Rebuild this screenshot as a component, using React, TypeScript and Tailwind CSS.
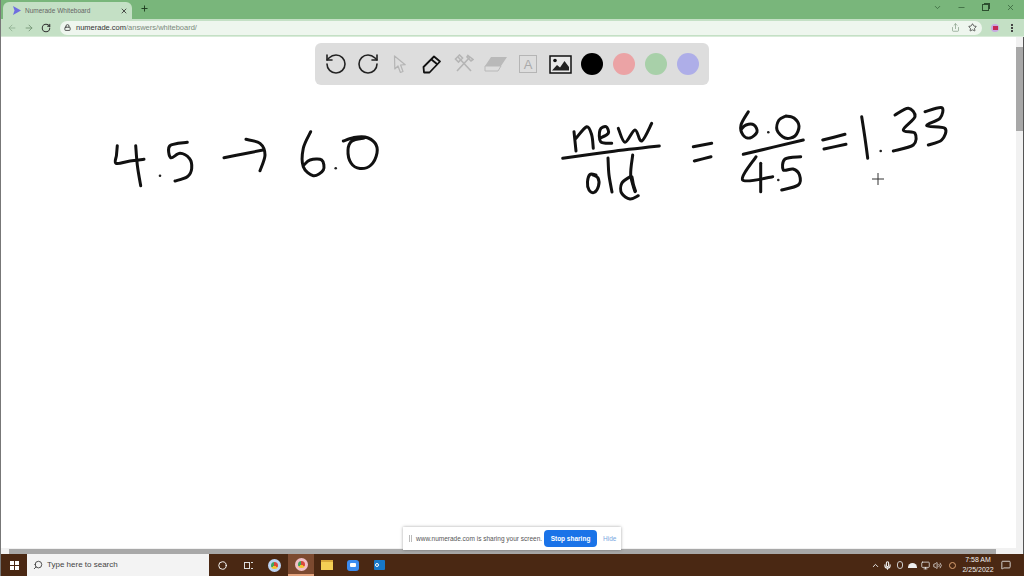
import React from 'react';
import { ArrowLeft, ArrowRight, RotateCw, RotateCcw, Lock, Star, Share, X, Plus, ChevronDown, Minus, ChevronUp, Mic, Search, Volume2, Monitor, MessageSquare, Circle } from 'lucide-react';

type Pt = [number, number];

// smooth a hand drawn stroke through its points
const smooth = (pts: Pt[]) => {
  let d = `M${pts[0][0]} ${pts[0][1]}`;
  for (let i = 0; i < pts.length - 1; i++) {
    const p0 = pts[Math.max(i - 1, 0)];
    const p1 = pts[i];
    const p2 = pts[i + 1];
    const p3 = pts[Math.min(i + 2, pts.length - 1)];
    const c1x = p1[0] + (p2[0] - p0[0]) / 6;
    const c1y = p1[1] + (p2[1] - p0[1]) / 6;
    const c2x = p2[0] - (p3[0] - p1[0]) / 6;
    const c2y = p2[1] - (p3[1] - p1[1]) / 6;
    d += ` C${c1x.toFixed(1)} ${c1y.toFixed(1)} ${c2x.toFixed(1)} ${c2y.toFixed(1)} ${p2[0]} ${p2[1]}`;
  }
  return d;
};

const strokes: Pt[][] = [
  // 4.5
  [[117.3, 145.7], [116.5, 155], [116, 163.3], [130, 161], [144, 159.3]],
  [[135.7, 145.7], [137.3, 165], [140.7, 185.7]],
  [[187.3, 142.3], [170, 145.7], [170.7, 157.7], [180, 153.3], [189.3, 158.3], [191.7, 168.3], [187.3, 176.7], [175, 181]],
  // arrow
  [[224, 157.7], [243, 154], [263, 150]],
  [[246, 139.3], [260, 143.3], [265, 155], [260, 170.7]],
  // 6.0
  [[310.7, 131.7], [303.3, 148.3], [303.3, 166.7], [313.3, 175.7], [323.3, 170], [321.7, 160], [310, 160], [304, 165]],
  [[343.3, 141], [354, 137.5], [365, 137], [375, 143], [377, 153], [371, 165], [360, 168.5], [351, 163], [348, 150], [352, 141], [364, 138]],
  // new
  [[574, 131.7], [576, 151]],
  [[576, 138.3], [586.7, 126.7], [591.7, 135], [593.3, 148.3]],
  [[600, 138.3], [608.3, 133.3], [606, 126.7], [600, 130], [600.7, 141.7], [611.7, 143.3]],
  [[618.3, 128.3], [625, 142.3], [635, 130], [641.7, 141], [651.7, 123.3]],
  [[562.7, 158.3], [610, 151.7], [659.3, 146]],
  // old
  [[596, 175], [590, 174.5], [587.5, 182], [589, 190], [594, 192.5], [598.5, 186], [598, 178], [593, 175]],
  [[608, 158], [609, 175], [612, 192]],
  [[632.7, 155], [630.7, 175], [635, 191.7]],
  [[632, 177], [633.5, 185], [635.5, 191]],
  [[630, 176.7], [621.7, 183.3], [621.7, 193.3], [630, 199], [638.3, 195.7]],
  // = 6.0 / 4.5
  [[693.3, 146.7], [711.7, 143.3]],
  [[694.3, 161], [711, 156.7]],
  [[748.3, 111.7], [741, 125], [743, 135], [750, 138], [757, 132], [754, 125], [746, 125], [741.5, 129]],
  [[786, 116], [779, 120], [777, 130], [785, 138], [795, 136], [799, 126], [794, 118], [786, 116]],
  [[743.3, 154.3], [803.3, 140]],
  [[756, 156.7], [742.7, 180], [772.7, 176.7]],
  [[760.7, 163.3], [760.7, 191.7]],
  [[800.7, 156.7], [785, 159], [783.3, 170], [793, 169], [799.5, 175], [798.3, 185], [781.7, 190]],
  // = 1.33
  [[822.7, 140], [845, 134.3]],
  [[824, 149], [846, 144.3]],
  [[861.7, 116.7], [865, 138.3], [867.7, 158.3]],
  [[895, 115], [908.3, 108.3], [915, 116.7], [903.3, 130], [915, 133.3], [913.3, 145], [893.3, 151]],
  [[925, 111.7], [941.7, 107.7], [940, 118.3], [926.7, 125.7], [945, 128.3], [941.7, 140], [928.3, 145]],
];

const dots: Pt[] = [[160, 175.7], [335.7, 168.3], [768.3, 132.3], [778.3, 180], [880.7, 151]];

const Ink = () => (
  <svg className="absolute -left-px top-0" width="1015" height="511" viewBox="0 37 1015 511" fill="none">
    {strokes.map((s, i) => (
      <path key={i} d={smooth(s)} stroke="#111" strokeWidth="3" strokeLinecap="round" strokeLinejoin="round" />
    ))}
    {dots.map(([x, y], i) => (
      <circle key={i} cx={x} cy={y} r="1.3" fill="#222" />
    ))}
    {/* crosshair pointer */}
    <path d="M878 173v12M872 179h12" stroke="#333" strokeWidth="1" />
  </svg>
);

const ToolSlot = ({ children }: { children: React.ReactNode }) => (
  <div className="w-8 h-8 flex items-center justify-center">{children}</div>
);

const Swatch = ({ className }: { className: string }) => (
  <ToolSlot>
    <div className={`w-[22px] h-[22px] rounded-full ${className}`} />
  </ToolSlot>
);

const Toolbar = () => (
  <div className="absolute left-[314px] top-[6px] w-[394px] h-[42px] bg-[#dddddd] rounded-md flex items-center pl-[5px]">
    <ToolSlot><RotateCcw size={24} strokeWidth={1.6} className="text-[#222]" /></ToolSlot>
    <ToolSlot><RotateCw size={24} strokeWidth={1.6} className="text-[#222]" /></ToolSlot>
    <ToolSlot>
      <svg width="14" height="19" viewBox="0 0 14 19" fill="none" stroke="#b5b5b5" strokeWidth="1.2" strokeLinejoin="round">
        <path d="M1.5 1 1.800 14l3.200-3 2.400 6.500 2.600-1-2.400-6.500 4.600-.3z" />
      </svg>
    </ToolSlot>
    <ToolSlot>
      <svg width="20" height="20" viewBox="0 0 20 20" fill="none" stroke="#111" strokeWidth="1.8" strokeLinejoin="round">
        <path d="M1.5 13 12 2.500 18 7.500 7.500 18.500H2z" />
        <path d="m9.500 5.500 6 5" />
      </svg>
    </ToolSlot>
    <ToolSlot>
      <svg width="20" height="20" viewBox="0 0 20 20" fill="none" stroke="#b5b5b5" strokeWidth="1.6">
        <path d="M4 3 17 17M16 3 3 17" />
        <path d="m1.5 5 4-4 3 3-4 4zM14 1.500l5 4-2 1.500-4-4z" />
      </svg>
    </ToolSlot>
    <ToolSlot>
      <svg width="24" height="18" viewBox="0 0 24 18" fill="none">
        <path d="M7 2h16l-6 9H1z" fill="#b9b9b9" />
        <path d="M1 11h16l-3 5H1z" stroke="#b9b9b9" strokeWidth="1" />
      </svg>
    </ToolSlot>
    <ToolSlot>
      <div className="w-[18px] h-[18px] border border-[#b5b5b5] flex items-center justify-center text-[13px] leading-none text-[#aaaaaa] font-['Liberation_Sans',sans-serif]">A</div>
    </ToolSlot>
    <ToolSlot>
      <svg width="23" height="19" viewBox="0 0 23 19">
        <rect x="1" y="1" width="21" height="17" fill="#e8e8e8" stroke="#111" strokeWidth="1.5" />
        <circle cx="6" cy="5.500" r="1.800" fill="#111" />
        <path d="M3 15.500 8 10l3 2.500L15.500 6 20 12v3.500z" fill="#222" />
      </svg>
    </ToolSlot>
    <Swatch className="bg-black" />
    <Swatch className="bg-[#eba3a5]" />
    <Swatch className="bg-[#a8d0a9]" />
    <Swatch className="bg-[#aeaee8]" />
  </div>
);

const ShareBar = () => (
  <div className="absolute left-[402px] top-[490px] w-[218px] h-[23px] bg-white shadow-[0_0_3px_rgba(0,0,0,0.35)] flex items-center text-[6.5px] text-[#555] font-['Liberation_Sans',sans-serif]">
    <div className="ml-[6px] w-[3px] h-[7px] border-x border-[#bbb]" />
    <span className="ml-[4px] whitespace-nowrap">www.numerade.com is sharing your screen.</span>
    <div className="absolute left-[141px] top-[3px] w-[53px] h-[17px] rounded-sm bg-[#1a73e8] text-white font-bold flex items-center justify-center">Stop sharing</div>
    <span className="absolute left-[200px] text-[#7aa7e0]">Hide</span>
  </div>
);

const ChromeBar = () => (
  <div className="bg-[#79b67b] font-['Liberation_Sans',sans-serif]">
    <div className="h-[19px] flex items-end pl-[2px]">
      <div className="w-[129px] h-[17px] bg-[#c4e0c5] rounded-t-md flex items-center pl-[8px] pr-[4px]">
        <svg width="11" height="11" viewBox="0 0 11 11"><path d="M2 1l8 4.500L2 10l1.500-4.500z" fill="#6e6ee0" /></svg>
        <span className="ml-[3px] text-[6.5px] text-[#666] whitespace-nowrap flex-1">Numerade Whiteboard</span>
        <X size={8} strokeWidth={2.5} className="text-[#333]" />
      </div>
      <Plus size={9} strokeWidth={2.5} className="ml-[8px] mb-[6px] text-[#1d3d1f]" />
      <div className="flex-1" />
      <div className="flex items-center self-start mt-[3px] text-[#35603a]">
        <ChevronDown size={9} className="mr-[15px]" />
        <Minus size={9} className="mr-[16px]" />
        <div className="relative w-[7px] h-[7px] border border-[#2d4f2f] mr-[17px]">
          <div className="absolute -top-[2px] -right-[2px] w-[6px] h-[6px] border-t border-r border-[#2d4f2f]" />
        </div>
        <X size={9} className="mr-[9px]" />
      </div>
    </div>
    <div className="h-[18px] bg-[#c4e0c5] flex items-center pl-[6px] border-b border-[#d9ebd9]">
      <ArrowLeft size={10} className="text-[#8fae90]" />
      <ArrowRight size={10} className="ml-[7px] text-[#6f8f70]" />
      <RotateCw size={10} strokeWidth={2.5} className="ml-[7px] text-[#333]" />
      <div className="ml-[9px] w-[922px] h-[14px] bg-[#eef6ee] rounded-full flex items-center pl-[4px]">
        <Lock size={7} strokeWidth={3} className="text-[#444]" />
        <span className="ml-[5px] text-[7.5px] text-[#333] whitespace-nowrap">numerade.com<span className="text-[#7a8a7b]">/answers/whiteboard/</span></span>
        <div className="flex-1" />
        <Share size={9} className="text-[#8aa08b] mr-[8px]" />
        <Star size={9} className="text-[#333] mr-[5px]" />
      </div>
      <div className="ml-[9px] w-[8px] h-[8px] bg-[#c9a8e0] rounded-sm flex items-center justify-center">
        <div className="w-[5px] h-[4px] bg-[#c42a55]" />
      </div>
      <div className="ml-[12px] flex flex-col gap-px">
        <div className="w-[2px] h-[2px] bg-[#444]" />
        <div className="w-[2px] h-[2px] bg-[#444]" />
        <div className="w-[2px] h-[2px] bg-[#444]" />
      </div>
    </div>
  </div>
);

const ChromeIcon = ({ ring }: { ring: string }) => (
  <div className={`w-[13px] h-[13px] rounded-full bg-[conic-gradient(#d8483b_0_33%,#f2c230_33%_66%,#3fa45b_66%)] border-[3px] ${ring}`} />
);

const Taskbar = () => (
  <div className="h-[22px] bg-[#4a2813] flex items-center font-['Liberation_Sans',sans-serif]">
    <div className="w-[26px] flex justify-center">
      <div className="grid grid-cols-2 gap-px w-[9px] h-[9px]">
        <div className="bg-white" /><div className="bg-white" /><div className="bg-white" /><div className="bg-white" />
      </div>
    </div>
    <div className="w-[182px] h-full bg-[#f3f3f3] flex items-center pl-[6px]">
      <Search size={10} className="text-[#333] -scale-x-100" />
      <span className="ml-[4px] text-[8px] text-[#444] whitespace-nowrap">Type here to search</span>
    </div>
    <div className="flex items-center h-full">
      <div className="w-[26px] flex justify-center"><Circle size={9} strokeWidth={2.5} className="text-white" /></div>
      <div className="w-[26px] flex justify-center">
        <div className="flex gap-px items-center">
          <div className="w-[6px] h-[7px] border border-[#ddd]" />
          <div className="w-[2px] h-[7px] border-y border-[#ddd]" />
        </div>
      </div>
      <div className="w-[27px] flex justify-center"><ChromeIcon ring="border-[#bcd3f2]" /></div>
      <div className="w-[26px] h-full flex justify-center items-center bg-[#7c4a30] border-b-2 border-[#e2a27c]"><ChromeIcon ring="border-[#f0c0c8]" /></div>
      <div className="w-[26px] flex justify-center"><div className="w-[12px] h-[10px] bg-[#f4cf55] border-t-2 border-[#d9a93a]" /></div>
      <div className="w-[26px] flex justify-center"><div className="w-[12px] h-[11px] rounded-[3px] bg-[#3b8cf0] flex items-center justify-center"><div className="w-[6px] h-[4px] bg-white rounded-[1px]" /></div></div>
      <div className="w-[26px] flex justify-center"><div className="w-[11px] h-[10px] bg-[#1778c8] rounded-[1px] flex items-center pl-[1px]"><div className="w-[4px] h-[4px] rounded-full border border-white" /></div></div>
    </div>
    <div className="flex-1" />
    <div className="flex items-center text-[#eee]">
      <ChevronUp size={9} strokeWidth={2.5} />
      <Mic size={9} strokeWidth={3} className="ml-[3px]" />
      <div className="ml-[5px] w-[6px] h-[8px] border border-[#ccc] rounded-sm" />
      <div className="ml-[5px] w-[9px] h-[5px] bg-[#eee] rounded-t-full" />
      <Monitor size={9} className="ml-[4px]" />
      <Volume2 size={9} className="ml-[3px]" />
      <div className="ml-[7px] w-[7px] h-[7px] rounded-full border border-[#d9a070]" />
      <div className="ml-[3px] w-[38px] text-center text-[7px] leading-[10px] whitespace-nowrap">
        <div>7:58 AM</div>
        <div>2/25/2022</div>
      </div>
      <MessageSquare size={10} className="ml-[4px] mr-[13px]" />
    </div>
  </div>
);

export default function App() {
  return (
    <div className="w-[1024px] h-[576px] overflow-hidden flex flex-col bg-white border-l border-[#777]">
      <ChromeBar />
      <div className="flex-1 flex min-h-0">
        <div className="flex-1 flex flex-col">
          <div className="flex-1 relative bg-white">
            <Ink />
            <Toolbar />
            <ShareBar />
          </div>
          <div className="h-[6px] bg-[#f1f1f1] flex items-center pl-[8px]">
            <div className="w-[987px] h-[5px] bg-[#a8a8a8]" />
          </div>
        </div>
        <div className="w-[8px] bg-[#f1f1f1] flex flex-col items-start pt-[10px] border-r border-[#555]">
          <div className="h-[84px] w-[7px] bg-[#a8a8a8]" />
        </div>
      </div>
      <Taskbar />
    </div>
  );
}
